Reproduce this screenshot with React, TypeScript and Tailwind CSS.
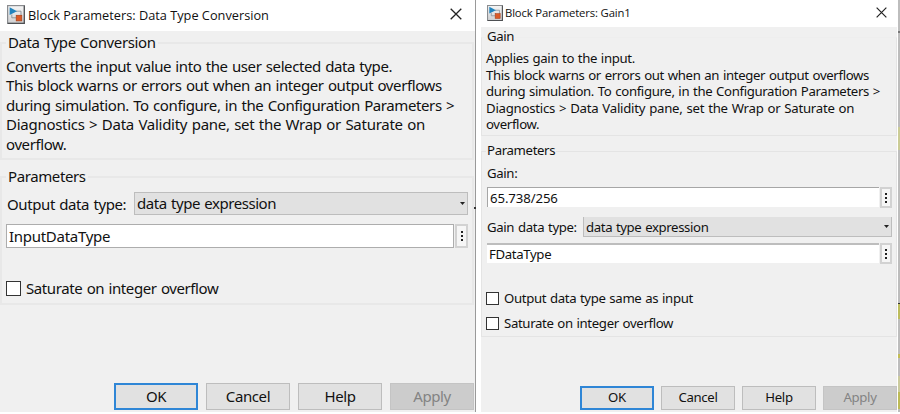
import type { ReactNode } from 'react';

function BlockIcon({ className }: { className: string }) {
  return (
    <svg viewBox="0 0 18 19" className={className} preserveAspectRatio="none">
      <defs>
        <linearGradient id="tile" x1="0" y1="0" x2="0" y2="1">
          <stop offset="0" stopColor="#f6f6f6" />
          <stop offset="1" stopColor="#cfd0d2" />
        </linearGradient>
      </defs>
      <rect x="0.6" y="0.6" width="16.8" height="17.8" fill="url(#tile)" stroke="#8a8c8f" strokeWidth="1.2" />
      <path d="M17.3 0.8V18.3H0.8" fill="none" stroke="#4e5053" strokeWidth="1.2" />
      <path d="M9 6.2H14V10.5M4.8 9.5V12.8H9" fill="none" stroke="#7d868d" strokeWidth="0.8" />
      <path d="M2.6 2.2L10 6.2L2.6 10Z" fill="#2183bd" />
      <rect x="9.2" y="10.3" width="5.6" height="5.6" fill="#dc5a26" stroke="#a84019" strokeWidth="0.7" />
    </svg>
  );
}

function CloseIcon({ className }: { className: string }) {
  return (
    <svg viewBox="0 0 12 12" className={className}>
      <path d="M0.7 0.7L11.3 11.3M11.3 0.7L0.7 11.3" stroke="#222" strokeWidth="1.3" fill="none" />
    </svg>
  );
}

function MoreButton({ className }: { className: string }) {
  return (
    <div className={`flex shrink-0 flex-col items-center justify-center gap-[2px] border-2 border-[#d2d2d2] bg-[#f6f6f6] ${className}`}>
      <i className="size-[2px] bg-[#222]" />
      <i className="size-[2px] bg-[#222]" />
      <i className="size-[2px] bg-[#222]" />
    </div>
  );
}

function Arrow() {
  return (
    <svg viewBox="0 0 5 3" className="h-[3px] w-[5px]">
      <path d="M0 0H5L2.5 3Z" fill="#222" />
    </svg>
  );
}

function Button({ children, className }: { children: ReactNode; className: string }) {
  return <div className={`flex shrink-0 items-center justify-center ${className}`}>{children}</div>;
}

const body = "font-['Noto_Sans',sans-serif] whitespace-nowrap text-[#111] tracking-[-0.0265em] [word-spacing:0.053em]";

function ConversionDialog() {
  return (
    <section className={`flex h-[412px] w-[476px] shrink-0 flex-col border-r border-[#9a9a9a] bg-[#f0f0f0] text-[15px] ${body}`}>
      <header className="flex h-[31px] shrink-0 items-center bg-white pl-[7px] pr-[13px]">
        <BlockIcon className="mt-[-3px] h-[19px] w-[18px]" />
        <span className="ml-[3px] font-['Open_Sans',sans-serif] text-[12.75px] tracking-normal [word-spacing:0]">Block Parameters: Data Type Conversion</span>
        <CloseIcon className="mt-[-3px] ml-auto size-[12px]" />
      </header>
      <fieldset className="mt-[2px] h-[127px] w-[474px] shrink-0 border-2 border-[#e8e8e8] pl-[4px]">
        <legend className="h-5 px-[2px] leading-[18px]">Data Type Conversion</legend>
        <div className="pt-[4px] leading-[19.4px]">
          <p>Converts the input value into the user selected data type.</p>
          <p>This block warns or errors out when an integer output overflows</p>
          <p>during simulation. To configure, in the Configuration Parameters &gt;</p>
          <p className="tracking-[-0.27px]">Diagnostics &gt; Data Validity pane, set the Wrap or Saturate on</p>
          <p>overflow.</p>
        </div>
      </fieldset>
      <fieldset className="mt-[7px] h-[138px] w-[474px] shrink-0 border-2 border-[#e8e8e8] pl-[4px]">
        <legend className="h-5 px-[2px] leading-[18px]">Parameters</legend>
        <div className="mt-[5px] flex h-[23px]">
          <span className="w-[128px] pl-[1px] leading-[24px]">Output data type:</span>
          <div className="flex w-[334px] items-center justify-between border border-[#bdbdbd] bg-[#e1e1e1] pl-[2px] pr-[2px]">
            <span className="leading-[23px] tracking-[-0.44px]">data type expression</span>
            <Arrow />
          </div>
        </div>
        <div className="mt-[9px] flex h-6 gap-[1px]">
          <div className="w-[448px] border border-[#adadad] bg-white pl-[2px] leading-[23px] tracking-[-0.28px]">InputDataType</div>
          <MoreButton className="w-[13px]" />
        </div>
        <div className="mt-[32px] flex h-[16px] items-center">
          <i className="size-[15px] border border-[#333] bg-white" />
          <span className="ml-[5px]">Saturate on integer overflow</span>
        </div>
      </fieldset>
      <footer className="mt-[78px] flex h-[27px] shrink-0 justify-end gap-2 pr-[1px] leading-[24px]">
        <Button className="w-[84px] border-2 border-[#2f86d6] bg-[#e1e1e1] pb-[2px]">OK</Button>
        <Button className="w-[84px] border border-[#bdbdbd] bg-[#e1e1e1] pb-[2px]">Cancel</Button>
        <Button className="w-[84px] border border-[#bdbdbd] bg-[#e1e1e1] pb-[2px]">Help</Button>
        <Button className="w-[84px] border border-[#c4c4c4] bg-[#cccccc] pb-[2px] text-[#838383]">Apply</Button>
      </footer>
    </section>
  );
}

function GainDialog() {
  return (
    <section className={`flex h-[412px] w-[416px] shrink-0 flex-col bg-[#f0f0f0] text-[13.2px] ${body}`}>
      <header className="flex h-[27px] shrink-0 items-center bg-white pl-[6px] pr-[10px]">
        <BlockIcon className="mt-[-1px] h-[16px] w-[16px]" />
        <span className="ml-[2px] font-['Open_Sans',sans-serif] text-[11.3px] tracking-[-0.15px] [word-spacing:0]">Block Parameters: Gain1</span>
        <CloseIcon className="mt-[-2px] ml-auto size-[11px]" />
      </header>
      <fieldset className="mt-[1px] h-[108px] shrink-0 border border-[#e4e4e4] border-t-[#eeeeee] pl-[4px]">
        <legend className="h-[18px] px-[1px] leading-[16px]">Gain</legend>
        <div className="pt-[4px] leading-[16.5px]">
          <p>Applies gain to the input.</p>
          <p>This block warns or errors out when an integer output overflows</p>
          <p>during simulation. To configure, in the Configuration Parameters &gt;</p>
          <p className="tracking-[-0.24px]">Diagnostics &gt; Data Validity pane, set the Wrap or Saturate on</p>
          <p>overflow.</p>
        </div>
      </fieldset>
      <fieldset className="mt-[6px] h-[195px] shrink-0 border border-[#e4e4e4] pl-[4px]">
        <legend className="h-[18px] px-[1px] leading-[16px]">Parameters</legend>
        <div className="mt-[4px] h-[18px] pl-[1px] leading-[18px]">Gain:</div>
        <div className="mt-[5px] flex h-[21px] items-start gap-[1px] pl-[1px]">
          <div className="h-[20px] w-[392px] border-t border-l border-[#a6a6a6] bg-white pl-[2px] leading-[20px] tracking-[-0.1px]">65.738/256</div>
          <MoreButton className="h-[21px] w-[12px]" />
        </div>
        <div className="mt-[9px] flex h-[20px]">
          <span className="w-[97px] pl-[1px] leading-[20px]">Gain data type:</span>
          <div className="flex w-[309px] items-center justify-between border-r border-b border-l border-[#bdbdbd] bg-[#e1e1e1] pl-[2px] pr-[2px]">
            <span className="leading-[20px] tracking-[-0.38px]">data type expression</span>
            <Arrow />
          </div>
        </div>
        <div className="mt-[6px] flex h-[21px] items-start gap-[1px] pl-[1px]">
          <div className="h-[20px] w-[392px] border-t-2 border-[#bdbdbd] bg-white pl-[2px] leading-[18px]">FDataType</div>
          <MoreButton className="h-[21px] w-[12px]" />
        </div>
        <div className="mt-[28px] flex h-[13px] items-center">
          <i className="size-[13px] border border-[#333] bg-white" />
          <span className="ml-[5px]">Output data type same as input</span>
        </div>
        <div className="mt-[12px] flex h-[13px] items-center">
          <i className="size-[13px] border border-[#333] bg-white" />
          <span className="ml-[5px]">Saturate on integer overflow</span>
        </div>
      </fieldset>
      <footer className="mt-[49px] flex h-[24px] shrink-0 justify-end gap-[7px]">
        <Button className="w-[74px] border-2 border-[#2f86d6] bg-[#e1e1e1]">OK</Button>
        <Button className="w-[74px] border border-[#bdbdbd] bg-[#e1e1e1]">Cancel</Button>
        <Button className="w-[74px] border border-[#bdbdbd] bg-[#e1e1e1]">Help</Button>
        <Button className="w-[74px] border border-[#c4c4c4] bg-[#cccccc] text-[#838383]">Apply</Button>
      </footer>
    </section>
  );
}

function CanvasEdge() {
  return (
    <div className="ml-[1px] flex h-[412px] w-[2px] flex-col bg-[#bdbdbd]">
      <i className="mt-[31px] h-[2px] bg-[#777]" />
      <i className="mt-[94px] h-[23px] bg-[#cbcc96]" />
      <i className="mt-[153px] h-[1px] bg-[#333]" />
      <i className="h-[15px] bg-[#bdbd5e]" />
      <i className="mt-[35px] h-[4px] bg-[#c3bd55]" />
      <i className="mt-[18px] h-[16px] bg-[#cbcb9e]" />
      <i className="h-[17px] bg-[#bdbb57]" />
    </div>
  );
}

export default function App() {
  return (
    <main className="relative flex h-[414px] w-[900px] overflow-hidden bg-white">
      <ConversionDialog />
      <i className="absolute left-[474px] top-[207px] size-[2px] bg-[#333]" />
      <div className="w-[5px] shrink-0" />
      <GainDialog />
      <CanvasEdge />
    </main>
  );
}
